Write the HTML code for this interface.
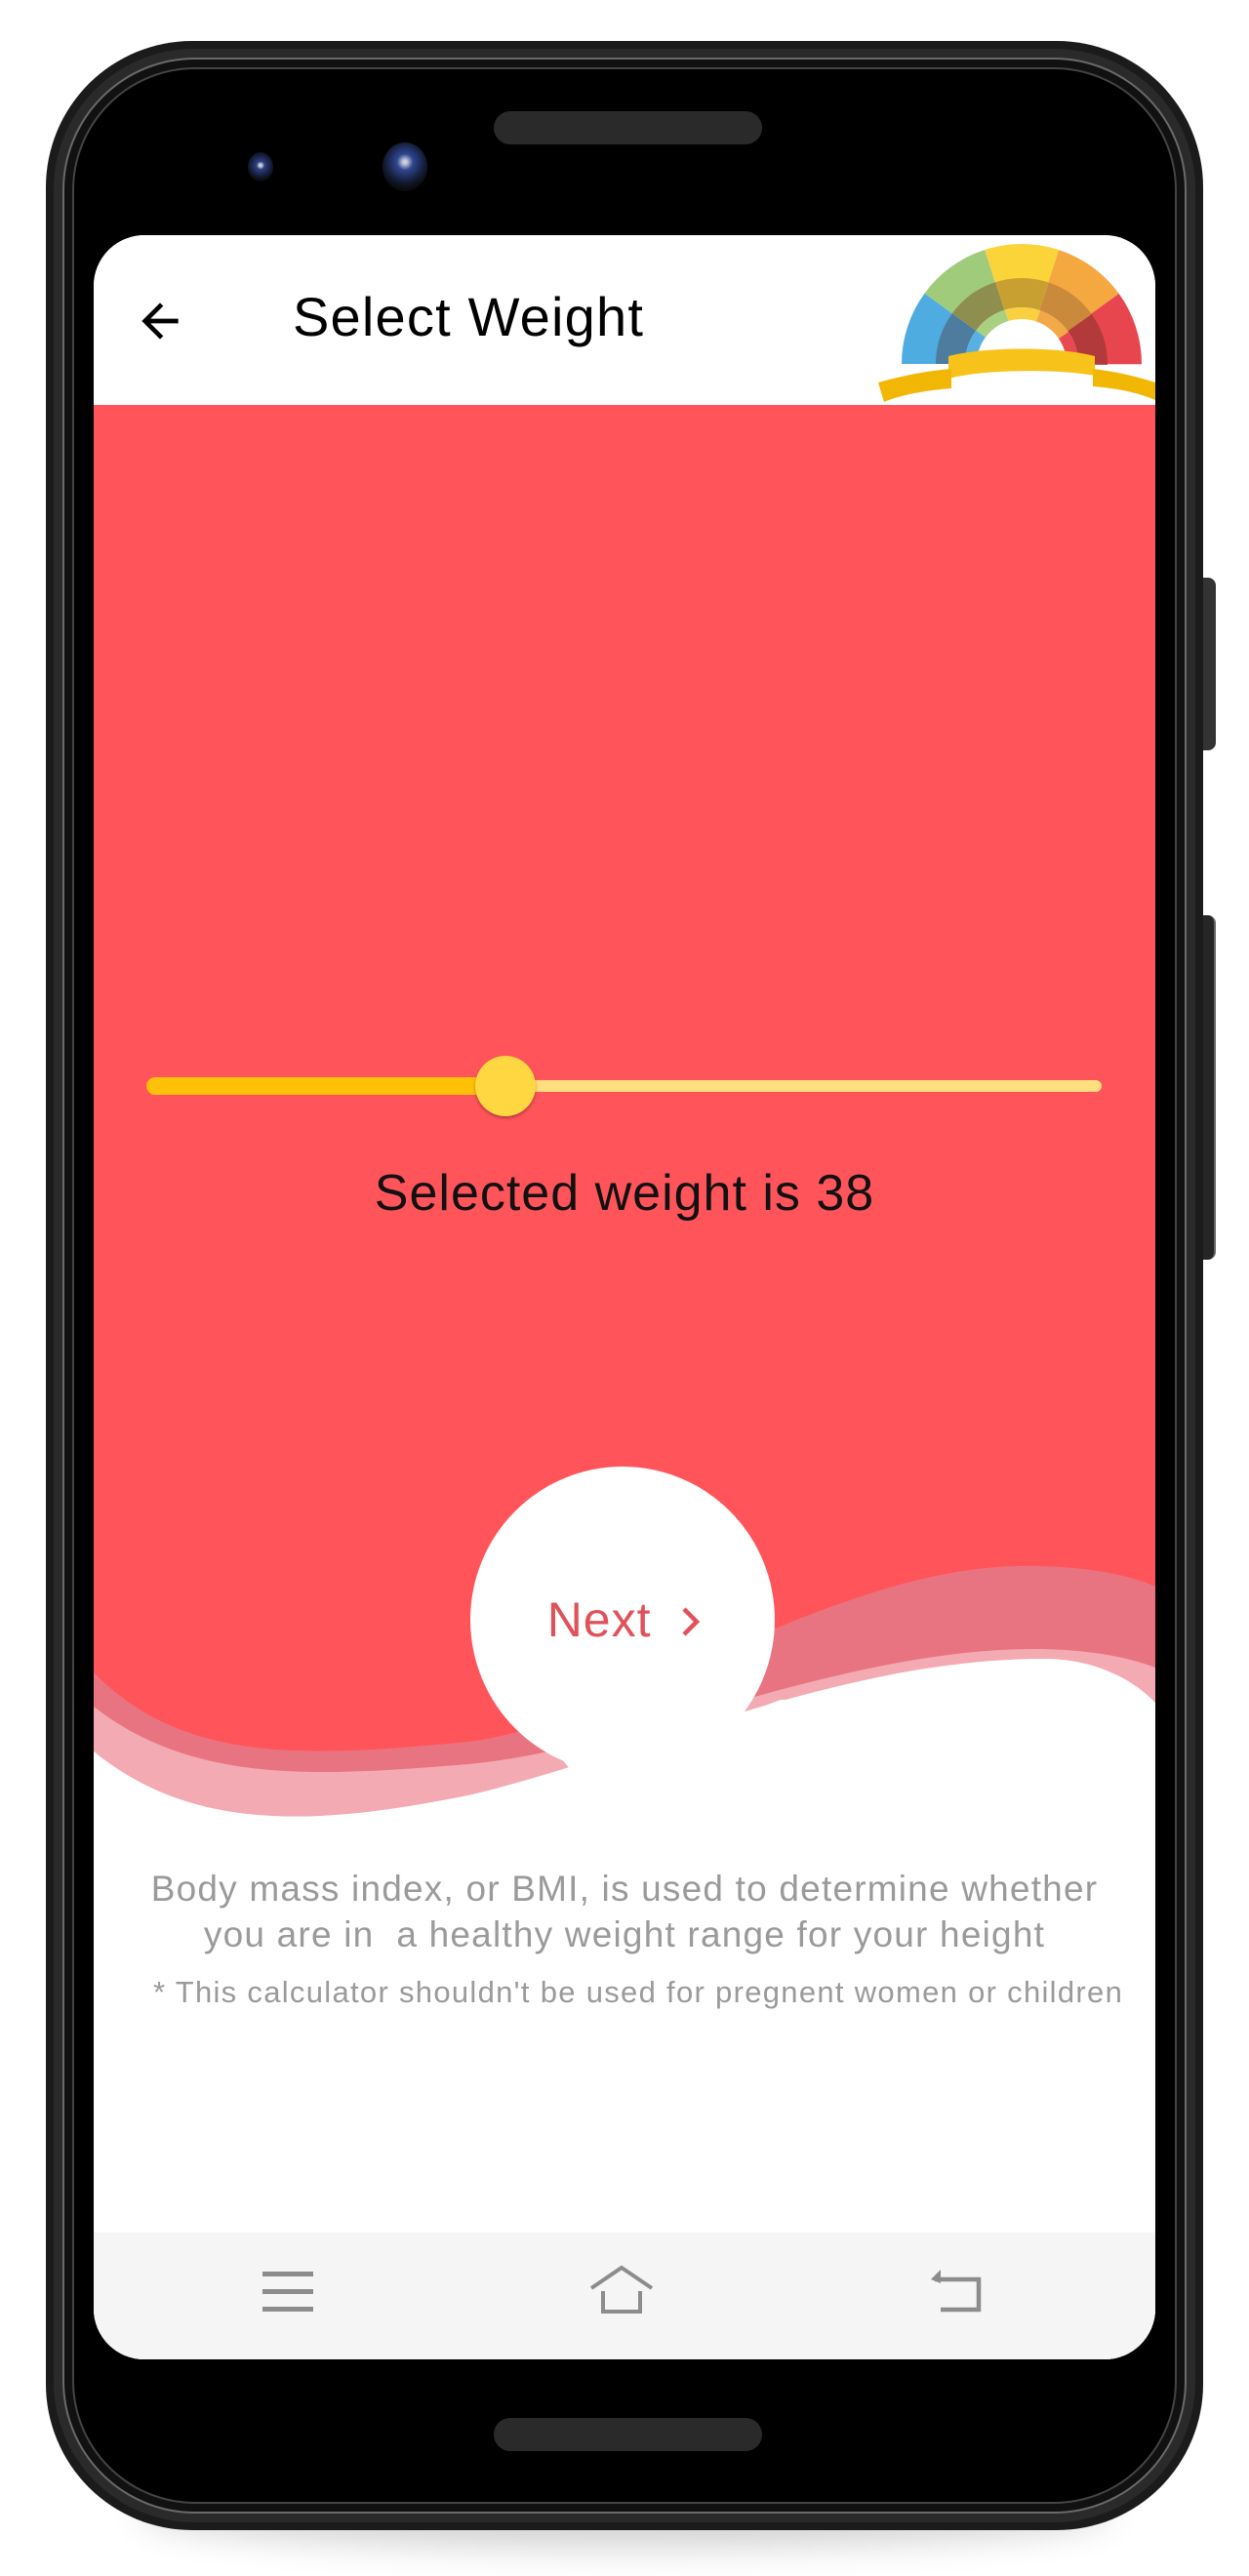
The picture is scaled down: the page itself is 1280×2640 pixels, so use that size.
<!DOCTYPE html>
<html><head><meta charset="utf-8"><style>
html,body{margin:0;padding:0;background:#fff;}
body{width:1280px;height:2640px;position:relative;overflow:hidden;font-family:"Liberation Sans",sans-serif;}
.abs{position:absolute;}
</style></head><body>
<div class="abs" style="left:140px;top:2540px;width:1000px;height:70px;border-radius:50%;background:#000;opacity:.18;filter:blur(18px);"></div>
<div class="abs" style="left:1226px;top:592px;width:20px;height:177px;border-radius:0 8px 8px 0;background:#333;"></div>
<div class="abs" style="left:1226px;top:938px;width:20px;height:353px;border-radius:0 8px 8px 0;background:#262626;border-right:2px solid #666;box-sizing:border-box;"></div>
<div class="abs" style="left:47px;top:42px;width:1186px;height:2551px;border-radius:150px;background:#1b1b1b;"></div>
<div class="abs" style="left:55px;top:50px;width:1170px;height:2535px;border-radius:144px;background:#2a2a2a;"></div>
<div class="abs" style="left:64px;top:59px;width:1152px;height:2517px;border-radius:136px;border:2px solid #6a6a6a;box-sizing:border-box;background:#111;"></div>
<div class="abs" style="left:74px;top:69px;width:1132px;height:2497px;border-radius:126px;border:2px solid #444;box-sizing:border-box;background:#000;"></div>
<div class="abs" style="left:506px;top:114px;width:275px;height:34px;border-radius:17px;background:#2a2a2a;"></div>
<div class="abs" style="left:506px;top:2478px;width:275px;height:34px;border-radius:17px;background:#2a2a2a;"></div>
<div class="abs" style="left:254px;top:156px;width:26px;height:30px;border-radius:50%;background:radial-gradient(circle at 50% 45%,#ccd 0 6%,#2d3f80 20%,#141a33 55%,#0a0a0a 75%);"></div>
<div class="abs" style="left:392px;top:146px;width:46px;height:50px;border-radius:50%;background:radial-gradient(circle at 50% 40%,#ccd 0 5%,#2f4690 22%,#131a33 55%,#0a0a0a 75%);"></div>
<div class="abs" style="left:96px;top:241px;width:1088px;height:2177px;border-radius:52px;overflow:hidden;background:#fff;">
  <div class="abs" style="left:0;top:174px;width:1088px;height:1700px;background:#FF545A;"></div>
  <svg class="abs" style="left:0;top:0" width="1088" height="2177" viewBox="96 241 1088 2177">
    <path d="M96,1714 C190,1810 320,1800 480,1785 C640,1765 860,1600 1060,1605 C1120,1606 1160,1615 1184,1626 L1184,2418 L96,2418 Z" fill="#E97481"/>
    <path d="M96,1749 C200,1830 330,1820 480,1808 C650,1792 860,1690 1060,1690 C1120,1690 1160,1700 1184,1709 L1184,2418 L96,2418 Z" fill="#F4AAB2"/>
    <path d="M96,1795 C200,1880 330,1870 480,1840 C650,1800 860,1700 1070,1700 C1120,1700 1160,1720 1184,1745 L1184,2418 L96,2418 Z" fill="#fff"/>
    <path d="M96,1795 C200,1880 330,1870 480,1840 C600,1815 700,1780 800,1742 L1184,1745 L1184,2418 L96,2418 Z" fill="#fff"/>
    <ellipse cx="638" cy="1660" rx="156" ry="157" fill="#fff"/>
    <path d="M540,1760 L590,1820 L660,1790 Z" fill="#fff"/>
  </svg>
  <div class="abs" style="left:0;top:0;width:1088px;height:174px;background:#fff;"></div>
  <svg class="abs" style="left:40px;top:60px" width="56" height="56" viewBox="0 0 24 24"><path d="M20 11H7.83l5.59-5.59L12 4l-8 8 8 8 1.41-1.41L7.83 13H20v-2z" fill="#000"/></svg>
  <div class="abs" style="left:204px;top:52px;font-size:56px;letter-spacing:1.2px;color:#000;line-height:64px;">Select Weight</div>
  <svg class="abs" style="left:804px;top:0" width="284" height="174" viewBox="900 241 284 174">
    <g transform="rotate(180 1047 373)" fill="none">
      <circle cx="1047" cy="373" r="105" stroke="#4EACE0" stroke-width="36" stroke-dasharray="66 594"/>
      <circle cx="1047" cy="373" r="105" stroke="#9FCB7A" stroke-width="36" stroke-dasharray="0 66 66 528"/>
      <circle cx="1047" cy="373" r="105" stroke="#FBD43A" stroke-width="36" stroke-dasharray="0 132 66 462"/>
      <circle cx="1047" cy="373" r="105" stroke="#F5A840" stroke-width="36" stroke-dasharray="0 198 66 396"/>
      <circle cx="1047" cy="373" r="105" stroke="#E8464E" stroke-width="36" stroke-dasharray="0 264 66 330"/>
      <circle cx="1047" cy="373" r="73" stroke="#4E7C9E" stroke-width="30" stroke-dasharray="46 413"/>
      <circle cx="1047" cy="373" r="73" stroke="#8E8E4E" stroke-width="30" stroke-dasharray="0 46 46 367"/>
      <circle cx="1047" cy="373" r="73" stroke="#C8A032" stroke-width="30" stroke-dasharray="0 92 46 321"/>
      <circle cx="1047" cy="373" r="73" stroke="#C98A3C" stroke-width="30" stroke-dasharray="0 138 46 275"/>
      <circle cx="1047" cy="373" r="73" stroke="#B23A3A" stroke-width="30" stroke-dasharray="0 184 46 229"/>
      <circle cx="1047" cy="373" r="52" stroke="#5AB0E0" stroke-width="12" stroke-dasharray="33 294"/>
      <circle cx="1047" cy="373" r="52" stroke="#A8D080" stroke-width="12" stroke-dasharray="0 33 33 261"/>
      <circle cx="1047" cy="373" r="52" stroke="#F8D040" stroke-width="12" stroke-dasharray="0 66 33 228"/>
      <circle cx="1047" cy="373" r="52" stroke="#F4A848" stroke-width="12" stroke-dasharray="0 99 33 195"/>
      <circle cx="1047" cy="373" r="52" stroke="#E84850" stroke-width="12" stroke-dasharray="0 132 33 162"/>
    </g>
    <path d="M972,365 C1010,355 1085,355 1122,365 L1122,385 C1085,378 1010,378 972,388 Z" fill="#F7C21A"/>
    <path d="M900,392 C925,385 950,380 975,378 L975,398 C950,400 925,404 906,412 Z" fill="#F2B705"/>
    <path d="M1120,378 C1145,381 1165,386 1184,392 L1184,410 C1165,402 1145,398 1120,396 Z" fill="#F2B705"/>
  </svg>
  <div class="abs" style="left:54px;top:863px;width:375px;height:18px;border-radius:9px;background:#FFC107;"></div>
  <div class="abs" style="left:420px;top:866px;width:613px;height:12px;border-radius:6px;background:#FFDE7D;"></div>
  <div class="abs" style="left:391px;top:841px;width:62px;height:62px;border-radius:50%;background:#FFD740;box-shadow:0 2px 3px rgba(0,0,0,.3);"></div>
  <div class="abs" style="left:0;top:952px;width:1088px;text-align:center;font-size:52px;letter-spacing:1px;color:#111;line-height:60px;">Selected weight is 38</div>
  <div class="abs" style="left:0;top:1391px;width:1088px;text-align:center;font-size:50px;letter-spacing:1px;color:#E0525A;line-height:56px;">Next &nbsp;<svg width="22" height="34" viewBox="0 0 22 34" style="vertical-align:-2px"><path d="M4 4 L17 17 L4 30" stroke="#E0525A" stroke-width="4.5" fill="none"/></svg></div>
  <div class="abs" style="left:-20px;top:1671px;width:1128px;text-align:center;font-size:37px;letter-spacing:1.2px;color:#9a9a9a;line-height:47px;">Body mass index, or BMI, is used to determine whether<br>you are in &nbsp;a healthy weight range for your height</div>
  <div class="abs" style="left:61px;top:1783px;width:1020px;font-size:31px;letter-spacing:1.3px;color:#9a9a9a;line-height:36px;white-space:nowrap;">* This calculator shouldn't be used for pregnent women or children</div>
  <div class="abs" style="left:0;top:2047px;width:1088px;height:130px;background:#F5F5F5;"></div>
  <svg class="abs" style="left:0;top:2027px" width="1088" height="130">
    <g fill="#8c8c8c"><rect x="173" y="60" width="52" height="5"/><rect x="173" y="78" width="52" height="5"/><rect x="173" y="96" width="52" height="5"/></g>
    <path d="M510 77 L541 56 L572 77" stroke="#8c8c8c" stroke-width="4" fill="none"/>
    <path d="M522 80 L522 101 L560 101 L560 80" stroke="#8c8c8c" stroke-width="4" fill="none"/>
    <path d="M862 68 L907 68 L907 99 L868 99" stroke="#8c8c8c" stroke-width="4.5" fill="none"/>
    <path d="M858 68 L868 58 L868 72 Z" fill="#8c8c8c"/>
  </svg>
</div>
</body></html>
